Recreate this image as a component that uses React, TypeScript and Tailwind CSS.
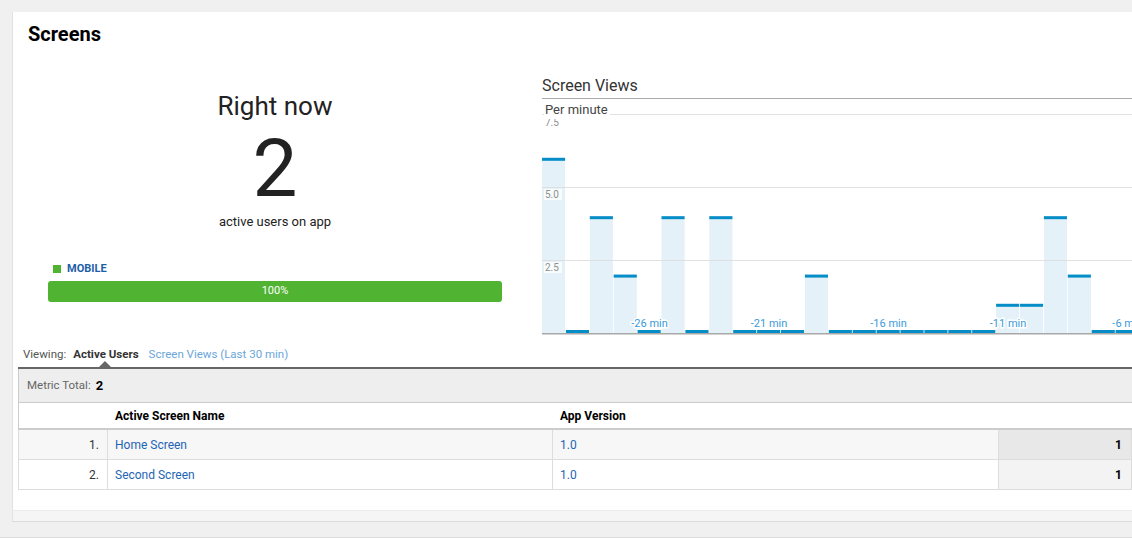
import React from 'react';

const BAR_W = 23.9;
const BASE = 219;
const UNIT = 29.2;

// screen views per minute, oldest first (-30 .. -1 min)
const views = [6, 0, 4, 2, 0, 4, 0, 4, 0, 0, 0, 2, 0, 0, 0, 0, 0, 0, 0, 1, 1, 4, 2, 0, 0, 0, 0, 0, 0, 0];

const rows = [
  { n: 1, name: 'Home Screen', version: '1.0', users: 1 },
  { n: 2, name: 'Second Screen', version: '1.0', users: 1 },
];

const Chart: React.FC = () => {
  const ticks = [4, 9, 14, 19, 24, 29];
  return (
    <svg width={730} height={222} className="block" style={{ fontFamily: 'Roboto, sans-serif' }}>
      {views.map((v, i) => {
        const x = i * BAR_W;
        const top = BASE - v * UNIT;
        return (
          <g key={i}>
            {v > 0 && <rect x={x} y={top} width={BAR_W - 0.8} height={BASE - top} fill="#e4f1f8" />}
            <rect x={x} y={v > 0 ? top : BASE - 3} width={BAR_W - 0.8} height={3} fill="#058dc7" />
          </g>
        );
      })}
      {[0, 73, 146].map((y) => (
        <rect key={y} x={0} y={y} width={730} height={1} fill="#d9d9d9" opacity={0.8} />
      ))}
      <rect x={0} y={BASE} width={730} height={1.5} fill="#a8a8a8" />
      {[
        { y: 12, t: '7.5' },
        { y: 84, t: '5.0' },
        { y: 157, t: '2.5' },
      ].map((l) => (
        <g key={l.t}>
          <rect x={2} y={l.y - 9} width={18} height={11} fill="#ffffff" opacity={0.75} />
          <text x={3} y={l.y} fontSize={10} fill="#8f8f8f">
            {l.t}
          </text>
        </g>
      ))}
      <rect x={0} y={1} width={40} height={4} fill="#ffffff" />
      {ticks.map((i) => (
        <text
          key={i}
          x={i * BAR_W + BAR_W / 2}
          y={213}
          fontSize={11}
          textAnchor="middle"
          fill="#3a9ad9"
          stroke="#ffffff"
          strokeWidth={3}
          paintOrder="stroke"
        >
          -{30 - i} min
        </text>
      ))}
    </svg>
  );
};

export default function App() {
  return (
    <div
      className="h-[538px] w-full overflow-hidden bg-[#f0f0f0] pl-[12px] pt-3 border-b border-[#dcdcdc]"
      style={{ fontFamily: 'Roboto, "Liberation Sans", sans-serif' }}
    >
      <div className="w-[1320px] bg-white pt-[10px] border-l border-[#e2e2e2] border-b border-b-[#dcdcdc]">
        {/* Title */}
        <div className="h-[24px] pl-[15px] text-[20px] font-bold leading-[24px] text-black">Screens</div>

        <div className="flex pl-[5px]">
          {/* Right now */}
          <div className="flex w-[514px] flex-col">
            <div className="mt-[44px] text-center text-[26px] leading-[32px] text-[#222]">Right now</div>
            <div className="mt-[7px] text-center text-[80px] leading-[80px] text-[#222]">2</div>
            <div className="mt-[5px] text-center text-[13px] leading-[16px] text-[#222]">active users on app</div>
            <div className="mt-[32px] flex items-center gap-[6px] pl-[35px]">
              <span className="h-[8px] w-[8px] bg-[#50b432]"></span>
              <span className="text-[11px] font-bold leading-[14px] text-[#1c5ea8]">MOBILE</span>
            </div>
            <div className="ml-[30px] mt-[5px] flex h-[21px] w-[454px] items-center justify-center rounded-[3px] bg-[#50b432] text-[11px] text-white">
              100%
            </div>
          </div>

          {/* Screen views chart */}
          <div className="ml-[10px] flex-1">
            <div className="mt-[30px] h-[23px] border-b border-[#aaaaaa] text-[16px] leading-[20px] text-[#333]">Screen Views</div>
            <div className="relative">
              <div className="pt-[15px]">
                <Chart />
              </div>
              <span className="absolute left-[2px] top-[3px] bg-white pl-[1px] pr-[2px] text-[13px] leading-[16px] text-[#444]">
                Per minute
              </span>
            </div>
          </div>
        </div>

        {/* Viewing switch */}
        <div className="mt-[11px] flex h-[14px] items-center pl-[10px] text-[11.5px] leading-[14px]">
          <span className="text-[#555]">Viewing:</span>
          <span className="relative ml-[7px] font-bold text-[#333]">
            Active Users
            <span className="absolute left-[26px] top-[14px] h-0 w-0 border-x-[6px] border-b-[6px] border-x-transparent border-b-[#666]"></span>
          </span>
          <span className="ml-[10px] text-[#6aa6d9]">Screen Views (Last 30 min)</span>
        </div>

        {/* Table */}
        <div className="ml-[5px] mt-[6px] border-t-2 border-[#666]">
          <div className="flex h-[34px] items-center border-b border-l border-[#cccccc] bg-[#eeeeee] pl-[8px] text-[11.5px]">
            <span className="text-[#666]">Metric Total:</span>
            <span className="ml-[5px] text-[13px] font-bold text-black">2</span>
          </div>
          <div className="flex h-[27px] items-center border-b-2 border-l border-[#cccccc] text-[12px] font-bold text-black">
            <div className="w-[89px]"></div>
            <div className="w-[445px] pl-[7px]">Active Screen Name</div>
            <div className="w-[446px] pl-[7px]">App Version</div>
          </div>
          {rows.map((r, i) => (
            <div
              key={r.n}
              className={`flex h-[30px] border-b border-l border-[#dddddd] text-[12px] ${i === 0 ? 'bg-[#f7f7f7]' : 'bg-white'}`}
            >
              <div className="flex w-[89px] items-center justify-end border-r border-[#dddddd] pr-[8px] text-[#333]">{r.n}.</div>
              <div className="flex w-[445px] items-center border-r border-[#dddddd] pl-[7px] text-[#1e64b4]">{r.name}</div>
              <div className="flex w-[446px] items-center border-r border-[#dddddd] pl-[7px] text-[#1e64b4]">{r.version}</div>
              <div
                className={`flex w-[133px] items-center justify-end border-r border-[#dddddd] pr-[9px] font-bold text-black ${i === 0 ? 'bg-[#e8e8e8]' : 'bg-[#f3f3f3]'}`}
              >
                {r.users}
              </div>
              <div className="w-[150px]"></div>
            </div>
          ))}
        </div>

        <div className="mt-[20px] h-[11px] border-t border-[#ececec] bg-[#f5f5f5]"></div>
      </div>
    </div>
  );
}
